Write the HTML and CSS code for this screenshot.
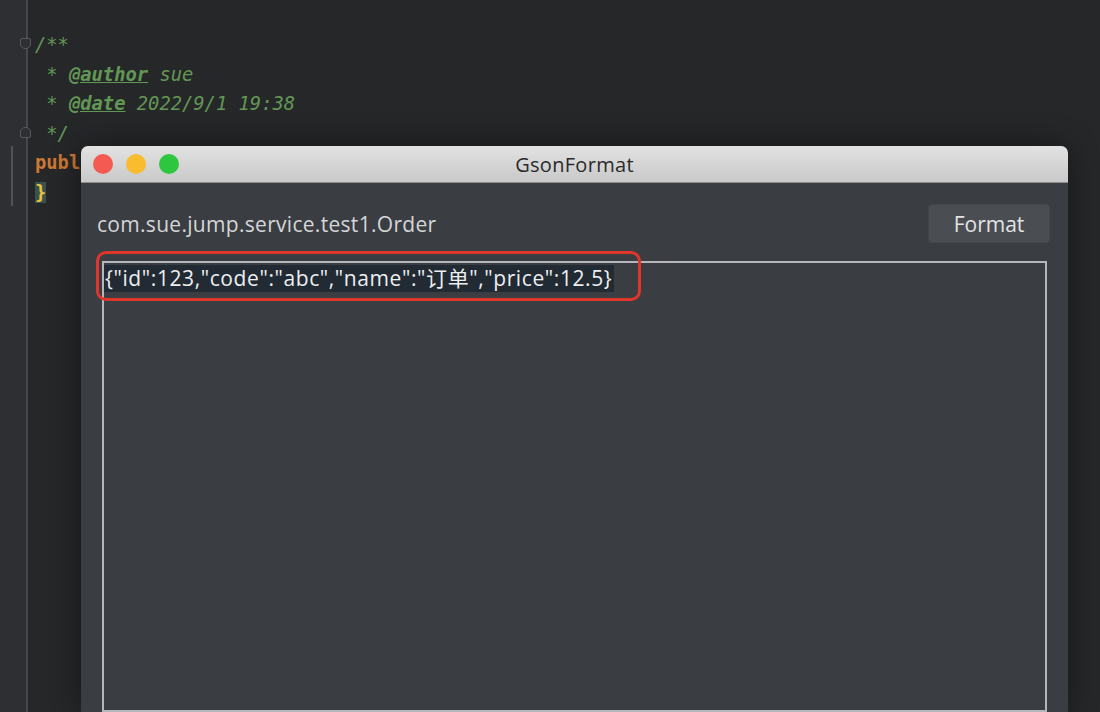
FILE: index.html
```html
<!DOCTYPE html>
<html lang="en">

<head>
    <meta charset="UTF-8">
    <meta name="viewport" content="width=device-width, initial-scale=1.0">
    <title>GsonFormat</title>
    <link rel="stylesheet" href="styles.css">
</head>

<body>
    <div class="ide">
        <!-- 左侧行号栏 -->
        <div class="gutter">
            <i class="fold fold-open"></i>
            <i class="fold fold-close"></i>
            <div class="change-mark"></div>
        </div>
        <div class="editor">
            <div class="line"><span class="cm">/**</span></div>
            <div class="line"><span class="cm"> * <b class="tag">@author</b> sue</span></div>
            <div class="line"><span class="cm"> * <b class="tag">@date</b> 2022/9/1 19:38</span></div>
            <div class="line"><span class="cm"> */</span></div>
            <div class="line"><span class="kw">public class</span> Order {</div>
            <div class="line"><span class="brace">}</span></div>
        </div>

        <!-- 弹窗 -->
        <div class="dialog">
            <div class="title-bar">
                <div class="lights">
                    <span class="light red"></span>
                    <span class="light yellow"></span>
                    <span class="light green"></span>
                </div>
                <div class="title">GsonFormat</div>
                <div></div>
            </div>
            <div class="dialog-body">
                <div class="head-row">
                    <span class="class-name">com.sue.jump.service.test1.Order</span>
                    <button class="btn-format">Format</button>
                </div>
                <div class="json-area">
                    <span class="json-text">{"id":123,"code":"abc","name":"订单","price":12.5}</span>
                </div>
            </div>
            <div class="mark-box"></div>
        </div>
    </div>
</body>

</html>
```

FILE: styles.css
```css
* {
    margin: 0;
    padding: 0;
    box-sizing: border-box;
}

body,
html {
    width: 100%;
    height: 100%;
    overflow: hidden;
    background-color: #262729;
}

.ide {
    display: flex;
    height: 100%;
    position: relative;
}

.ide .gutter {
    position: relative;
    width: 28px;
    padding-top: 146px;
    background-color: #2e2f32;
    border-right: 2px solid #45474a;
}

.ide .gutter .change-mark {
    width: 2px;
    height: 60px;
    margin-left: 11px;
    background-color: #505256;
}

.ide .gutter .fold {
    position: absolute;
    left: 20px;
    width: 11px;
    height: 11px;
    border: 1.5px solid #56585b;
    background-color: #2e2f32;
}

.ide .gutter .fold-open {
    top: 38px;
    border-radius: 2px 2px 5px 5px;
}

.ide .gutter .fold-close {
    top: 127px;
    border-radius: 5px 5px 2px 2px;
}

.ide .editor {
    flex: 1;
    padding: 30px 0 0 7px;
    font-family: "DejaVu Sans Mono", monospace;
    font-size: 18.8px;
    color: #a9b7c6;
}

.ide .editor .line {
    height: 29.5px;
    line-height: 29.5px;
    white-space: pre;
}

.ide .editor .cm {
    color: #629755;
    font-style: italic;
}

.ide .editor .tag {
    text-decoration: underline;
    font-weight: bold;
}

.ide .editor .kw {
    color: #cc7832;
    font-weight: bold;
}

.ide .editor .brace {
    color: #e8c33a;
    background-color: #3b514d;
    font-weight: bold;
}

.dialog {
    position: absolute;
    left: 81px;
    top: 146px;
    width: 987px;
    height: 566px;
    display: flex;
    flex-direction: column;
    background-color: #3a3d42;
    border-radius: 7px 7px 0 0;
    box-shadow: 0 0 30px rgba(0, 0, 0, .45);
}

.dialog .title-bar {
    display: grid;
    grid-template-columns: 1fr auto 1fr;
    align-items: center;
    height: 37px;
    padding: 0 12px;
    background: linear-gradient(#e2e2e2, #c9c9c9);
    border-bottom: 1px solid #8e8e8e;
    border-radius: 7px 7px 0 0;
}

.dialog .lights {
    display: flex;
    gap: 13px;
}

.dialog .light {
    width: 20px;
    height: 20px;
    border-radius: 50%;
}

.dialog .red {
    background-color: #f55a52;
}

.dialog .yellow {
    background-color: #f8bc2e;
}

.dialog .green {
    background-color: #2ec53f;
}

.dialog .title {
    font-family: "Open Sans", "Liberation Sans", sans-serif;
    font-size: 20px;
    font-weight: 500;
    letter-spacing: 0.3px;
    color: #2a2a2a;
}

.dialog .dialog-body {
    flex: 1;
    display: flex;
    flex-direction: column;
    padding: 21px 18px 0 16px;
    font-family: "Open Sans", "Liberation Sans", "Noto Sans CJK SC", sans-serif;
}

.dialog .head-row {
    display: flex;
    justify-content: space-between;
    align-items: center;
    height: 39px;
}

.dialog .class-name {
    font-size: 21px;
    color: #d4d6d8;
    letter-spacing: 0.3px;
}

.dialog .btn-format {
    width: 122px;
    height: 39px;
    border: 1px solid #44474c;
    border-radius: 4px;
    background-color: #4a4d52;
    color: #e2e3e5;
    font-family: "Open Sans", "Liberation Sans", sans-serif;
    font-size: 21px;
}

.dialog .json-area {
    flex: 1;
    margin: 18px 3px 0 5px;
    padding: 2px 0 0 0;
    border: 2px solid #b4b6b9;
    background-color: #3a3d42;
}

.dialog .json-text {
    display: inline-block;
    height: 27px;
    line-height: 27px;
    padding: 0 2px 0 1px;
    font-size: 21px;
    letter-spacing: 0.6px;
    color: #eceef0;
    background-color: #222a34;
    white-space: pre;
}

.dialog .mark-box {
    position: absolute;
    left: 15px;
    top: 105px;
    width: 545px;
    height: 50px;
    border: 3px solid #e0352b;
    border-radius: 10px;
}
```
